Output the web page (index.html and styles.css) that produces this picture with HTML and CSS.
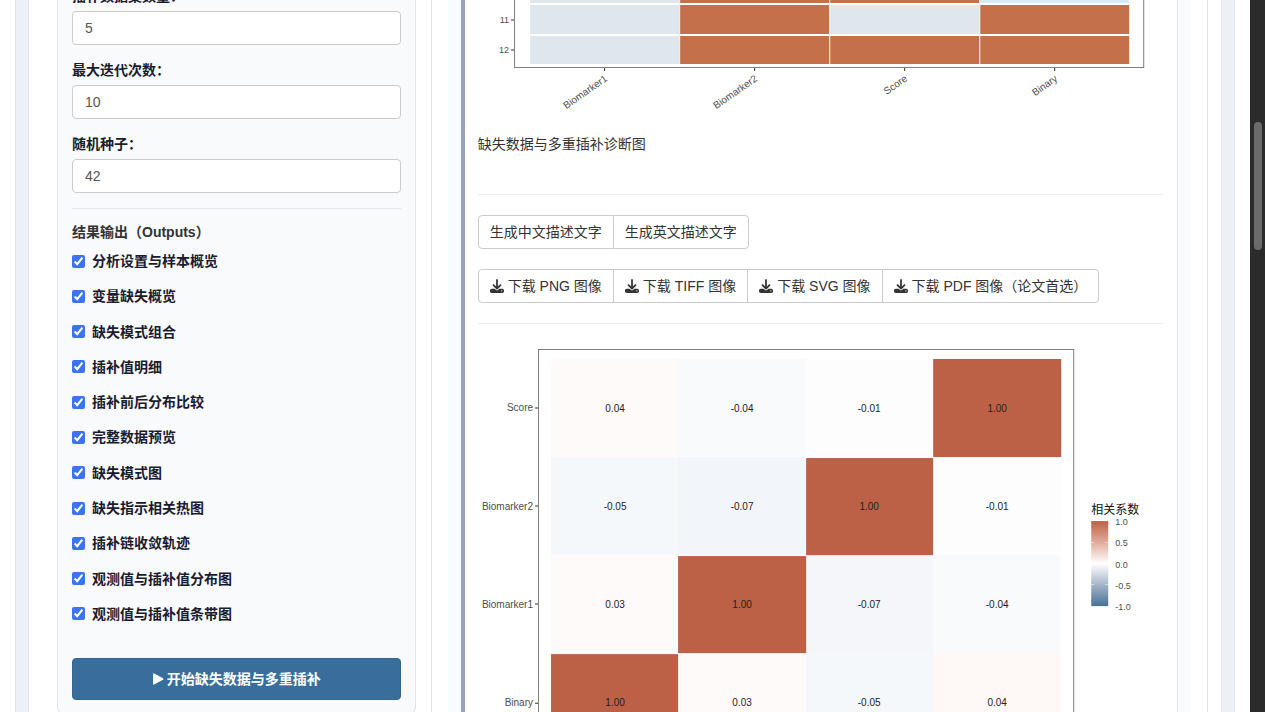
FILE: index.html
```html
<!DOCTYPE html>
<html lang="zh-CN">
<head>
<meta charset="utf-8">
<title>缺失数据与多重插补</title>
<link rel="stylesheet" href="styles.css">
</head>
<body>
<svg class="defs" aria-hidden="true">
  <symbol id="download" viewBox="0 0 512 512">
    <path d="M288 32c0-18-14-32-32-32s-32 14-32 32v243l-73-74c-13-12-33-12-46 0s-12 33 0 46l128 128c13 12 33 12 46 0l128-128c12-13 12-33 0-46s-33-12-46 0l-73 74V32zM64 352c-35 0-64 29-64 64v32c0 35 29 64 64 64h384c35 0 64-29 64-64v-32c0-35-29-64-64-64H347l-46 45c-25 25-65 25-90 0l-46-45H64zm368 56a24 24 0 1 1 0 48 24 24 0 1 1 0-48z"/>
  </symbol>
</svg>
<div class="frame">
  <div class="page">
    <form class="sidebar">
      <label class="field-label" for="m">插补数据集数量：</label>
      <input class="field" id="m" type="text" value="5">
      <label class="field-label" for="iter">最大迭代次数：</label>
      <input class="field" id="iter" type="text" value="10">
      <label class="field-label" for="seed">随机种子：</label>
      <input class="field" id="seed" type="text" value="42">
      <hr class="side-rule">
      <h4 class="side-title">结果输出（Outputs）</h4>
      <div class="checks">
        <label class="check"><input type="checkbox" checked>分析设置与样本概览</label>
        <label class="check"><input type="checkbox" checked>变量缺失概览</label>
        <label class="check"><input type="checkbox" checked>缺失模式组合</label>
        <label class="check"><input type="checkbox" checked>插补值明细</label>
        <label class="check"><input type="checkbox" checked>插补前后分布比较</label>
        <label class="check"><input type="checkbox" checked>完整数据预览</label>
        <label class="check"><input type="checkbox" checked>缺失模式图</label>
        <label class="check"><input type="checkbox" checked>缺失指示相关热图</label>
        <label class="check"><input type="checkbox" checked>插补链收敛轨迹</label>
        <label class="check"><input type="checkbox" checked>观测值与插补值分布图</label>
        <label class="check"><input type="checkbox" checked>观测值与插补值条带图</label>
      </div>
      <button class="run" type="button">
        <svg class="play" viewBox="0 0 12 12"><path d="M1 1.2Q1 0 2.2.5L11 5.2q1 .8 0 1.6L2.2 11.5Q1 12 1 10.800z"/></svg>
        开始缺失数据与多重插补
      </button>
    </form>
    <main class="results">
      <div class="tint">
        <section class="card">
          <svg class="chart" viewBox="0 0 685 120" role="img" aria-label="缺失模式图">
            <g class="miss">
              <path d="M52 0h149v3H52zM502 0h149v3H502zM52 5h149v29H52zM352 5h149v29H352zM52 36h149v28H52z"/>
            </g>
            <g class="obs">
              <path d="M202 0h149v3H202zM352 0h149v3H352zM202 5h149v29H202zM502 5h149v29H502zM202 36h149v28H202zM352 36h149v28H352zM502 36h149v28H502z"/>
            </g>
            <path class="grid" d="M201.500 0v64M351.500 0v64M501.500 0v64"/>
            <path class="axis" d="M36.500 0V67.500H665.500V0"/>
            <path class="tick" d="M33 20h3M33 50h3M126.500 68v3M276.500 68v3M426.500 68v3M576.500 68v3"/>
            <g class="tiny end"><text x="31" y="23">11</text><text x="31" y="53">12</text></g>
            <g class="axis-text end">
              <text transform="translate(130 80) rotate(-35)">Biomarker1</text>
              <text transform="translate(280 80) rotate(-35)">Biomarker2</text>
              <text transform="translate(430 80) rotate(-35)">Score</text>
              <text transform="translate(580 80) rotate(-35)">Binary</text>
            </g>
          </svg>
          <p class="caption">缺失数据与多重插补诊断图</p>
          <hr class="rule">
          <div class="group">
            <button class="btn" type="button">生成中文描述文字</button>
            <button class="btn" type="button">生成英文描述文字</button>
          </div>
          <div class="group">
            <button class="btn" type="button"><svg class="icon"><use href="#download"/></svg> 下载 PNG 图像</button>
            <button class="btn" type="button"><svg class="icon"><use href="#download"/></svg> 下载 TIFF 图像</button>
            <button class="btn" type="button"><svg class="icon"><use href="#download"/></svg> 下载 SVG 图像</button>
            <button class="btn" type="button"><svg class="icon"><use href="#download"/></svg> 下载 PDF 图像（论文首选）</button>
          </div>
          <hr class="rule">
          <svg class="chart" viewBox="0 1 685 440" role="img" aria-label="缺失指示相关热图">
            <defs>
              <linearGradient id="scale" x1="0" y1="0" x2="0" y2="1">
                <stop offset="0" stop-color="#bd6146"/><stop offset=".25" stop-color="#e0ab9b"/>
                <stop offset=".5" stop-color="#ffffff"/><stop offset=".75" stop-color="#a5b5c8"/>
                <stop offset="1" stop-color="#46719a"/>
              </linearGradient>
            </defs>
            <rect x="73" y="16" width="127" height="98" fill="#fefaf9"/>
            <rect x="200" y="16" width="128" height="98" fill="#f8fafc"/>
            <rect x="328" y="16" width="127" height="98" fill="#fdfdfe"/>
            <rect x="73" y="114" width="127" height="98" fill="#f5f8fa"/>
            <rect x="200" y="114" width="128" height="98" fill="#f2f5f9"/>
            <rect x="455" y="114" width="128" height="98" fill="#fdfdfe"/>
            <rect x="73" y="212" width="127" height="98" fill="#fefaf9"/>
            <rect x="328" y="212" width="127" height="98" fill="#f4f6f9"/>
            <rect x="455" y="212" width="128" height="98" fill="#f8fafc"/>
            <rect x="200" y="310" width="128" height="98" fill="#fefaf9"/>
            <rect x="328" y="310" width="127" height="98" fill="#f5f8fa"/>
            <rect x="455" y="310" width="128" height="98" fill="#fef8f6"/>
            <g fill="#bd6146">
              <rect x="455" y="16" width="128" height="98"/><rect x="328" y="115" width="127" height="97"/>
              <rect x="200" y="213" width="128" height="97"/><rect x="73" y="311" width="127" height="97"/>
            </g>
            <path class="axis" d="M60.500 441V6.500H595.500V441"/>
            <path class="tick" d="M57 65h3M57 163h3M57 261h3M57 360h3"/>
            <g class="axis-text end">
              <text x="55" y="68">Score</text><text x="55" y="167">Biomarker2</text>
              <text x="55" y="265">Biomarker1</text><text x="55" y="363">Binary</text>
            </g>
            <g class="value">
              <text x="137" y="69">0.04</text><text x="264" y="69">-0.04</text><text x="391" y="69">-0.01</text><text x="519" y="69">1.00</text>
              <text x="137" y="167">-0.05</text><text x="264" y="167">-0.07</text><text x="391" y="167">1.00</text><text x="519" y="167">-0.01</text>
              <text x="137" y="265">0.03</text><text x="264" y="265">1.00</text><text x="391" y="265">-0.07</text><text x="519" y="265">-0.04</text>
              <text x="137" y="363">1.00</text><text x="264" y="363">0.03</text><text x="391" y="363">-0.05</text><text x="519" y="363">0.04</text>
            </g>
            <text class="legend-title" x="613" y="171">相关系数</text>
            <rect x="613" y="178" width="17" height="85" fill="url(#scale)"/>
            <path class="notch" d="M613 199.500h3M627 199.500h3M613 241.500h3M627 241.500h3"/>
            <g class="tiny">
              <text x="637" y="182">1.0</text><text x="637" y="203">0.5</text><text x="637" y="225">0.0</text>
              <text x="637" y="246">-0.5</text><text x="637" y="267">-1.0</text>
            </g>
          </svg>
        </section>
      </div>
    </main>
  </div>
</div>
<div class="scroll-track"><div class="scroll-thumb"></div></div>
</body>
</html>
```
FILE: styles.css
```css
* { box-sizing: border-box; }

body {
  display: flex;
  height: 100vh;
  margin: 0;
  overflow: hidden;
  background: #fff;
  color: #333;
  font: 14px/20px "Liberation Sans", "Noto Sans CJK SC", sans-serif;
}

.defs { position: absolute; width: 0; height: 0; }

.frame {
  flex: 1;
  min-width: 0;
  margin: 0 15px;
  padding: 0 12px;
  border: solid #dfe4ee;
  border-width: 0 1px;
  background: #edf1f7;
}

.page {
  display: grid;
  grid-template-columns: 6fr 13fr;
  align-items: start;
  gap: 15px;
  padding: 0 13px 0 28px;
  border: solid #e3e7ee;
  border-width: 0 1px;
  background: #fff;
}

/* The form is scrolled partly out of view */
.sidebar {
  margin-top: -29px;
  padding: 14px;
  border: 1px solid #dfe3ea;
  border-radius: 8px;
  background: #f8fafc;
}

.field-label {
  display: block;
  margin-bottom: 5px;
  color: #1b1b2f;
  font-weight: 700;
}

.field {
  display: block;
  width: 100%;
  height: 34px;
  margin-bottom: 15px;
  padding: 0 12px;
  border: 1px solid #ccc;
  border-radius: 4px;
  background: #fff;
  color: #555;
  font: inherit;
}

.side-rule {
  margin: 0 0 13px;
  border: 0;
  border-top: 1px solid #e2e7ef;
}

.side-title { margin: 0 0 9px; font-size: 14px; line-height: 20px; }

.checks {
  display: flex;
  flex-direction: column;
  justify-content: space-between;
  min-height: 373px;
}

.check {
  display: flex;
  align-items: center;
  gap: 7px;
  color: #1b1b2f;
  font-weight: 700;
}

.check input {
  width: 13px;
  height: 13px;
  margin: 0;
  accent-color: #3b73f3;
}

.run {
  display: flex;
  align-items: center;
  justify-content: center;
  gap: 3px;
  width: 100%;
  height: 42px;
  margin-top: 34px;
  border: 1px solid #33658f;
  border-radius: 4px;
  background: #396e9c;
  color: #fff;
  font: inherit;
  font-weight: 700;
}

.play { width: 12px; height: 12px; fill: #fff; }

.results {
  min-width: 0;
  padding: 0 16px;
  border: solid #dfe3ec;
  border-width: 0 1px;
}

.tint { padding: 0 13px; background: #f8fbff; }

.card {
  padding: 0 14px 0 13px;
  border-left: 4px solid #98a2bf;
  border-right: 1px solid #dfe5ee;
  background: #fff;
}

.chart { display: block; width: 100%; height: auto; }

.caption { margin: 14px 0 40px; }

.rule { margin: 20px 0; border: 0; border-top: 1px solid #eee; }

.group { display: flex; margin-bottom: 20px; }

.btn {
  display: flex;
  align-items: center;
  gap: 4px;
  height: 34px;
  margin-left: -1px;
  padding: 0 11px;
  border: 1px solid #ccc;
  background: #fff;
  color: #333;
  font: inherit;
  white-space: nowrap;
}

.btn:first-child { margin-left: 0; border-radius: 4px 0 0 4px; }
.btn:last-child { border-radius: 0 4px 4px 0; }

.icon { width: 14px; height: 14px; fill: #333; }

.miss { fill: #dfe7ed; }
.obs { fill: #c4704a; }
.grid { fill: none; stroke: #f7e8e0; }
.axis { fill: none; stroke: #7f7f7f; }
.tick { fill: none; stroke: #333; }
.notch { fill: none; stroke: #fff; stroke-opacity: 0.5; }
.tiny { fill: #4d4d4d; font-size: 9px; }
.axis-text { fill: #4d4d4d; font-size: 10px; }
.end { text-anchor: end; }
.value { fill: #222; font-size: 10px; text-anchor: middle; }
.legend-title { fill: #111; font-size: 12px; }

.scroll-track {
  flex: 0 0 15px;
  padding: 122px 3px 0 4px;
  background: #2b2b2b;
}

.scroll-thumb { height: 128px; border-radius: 4px; background: #6b6b6b; }
```
